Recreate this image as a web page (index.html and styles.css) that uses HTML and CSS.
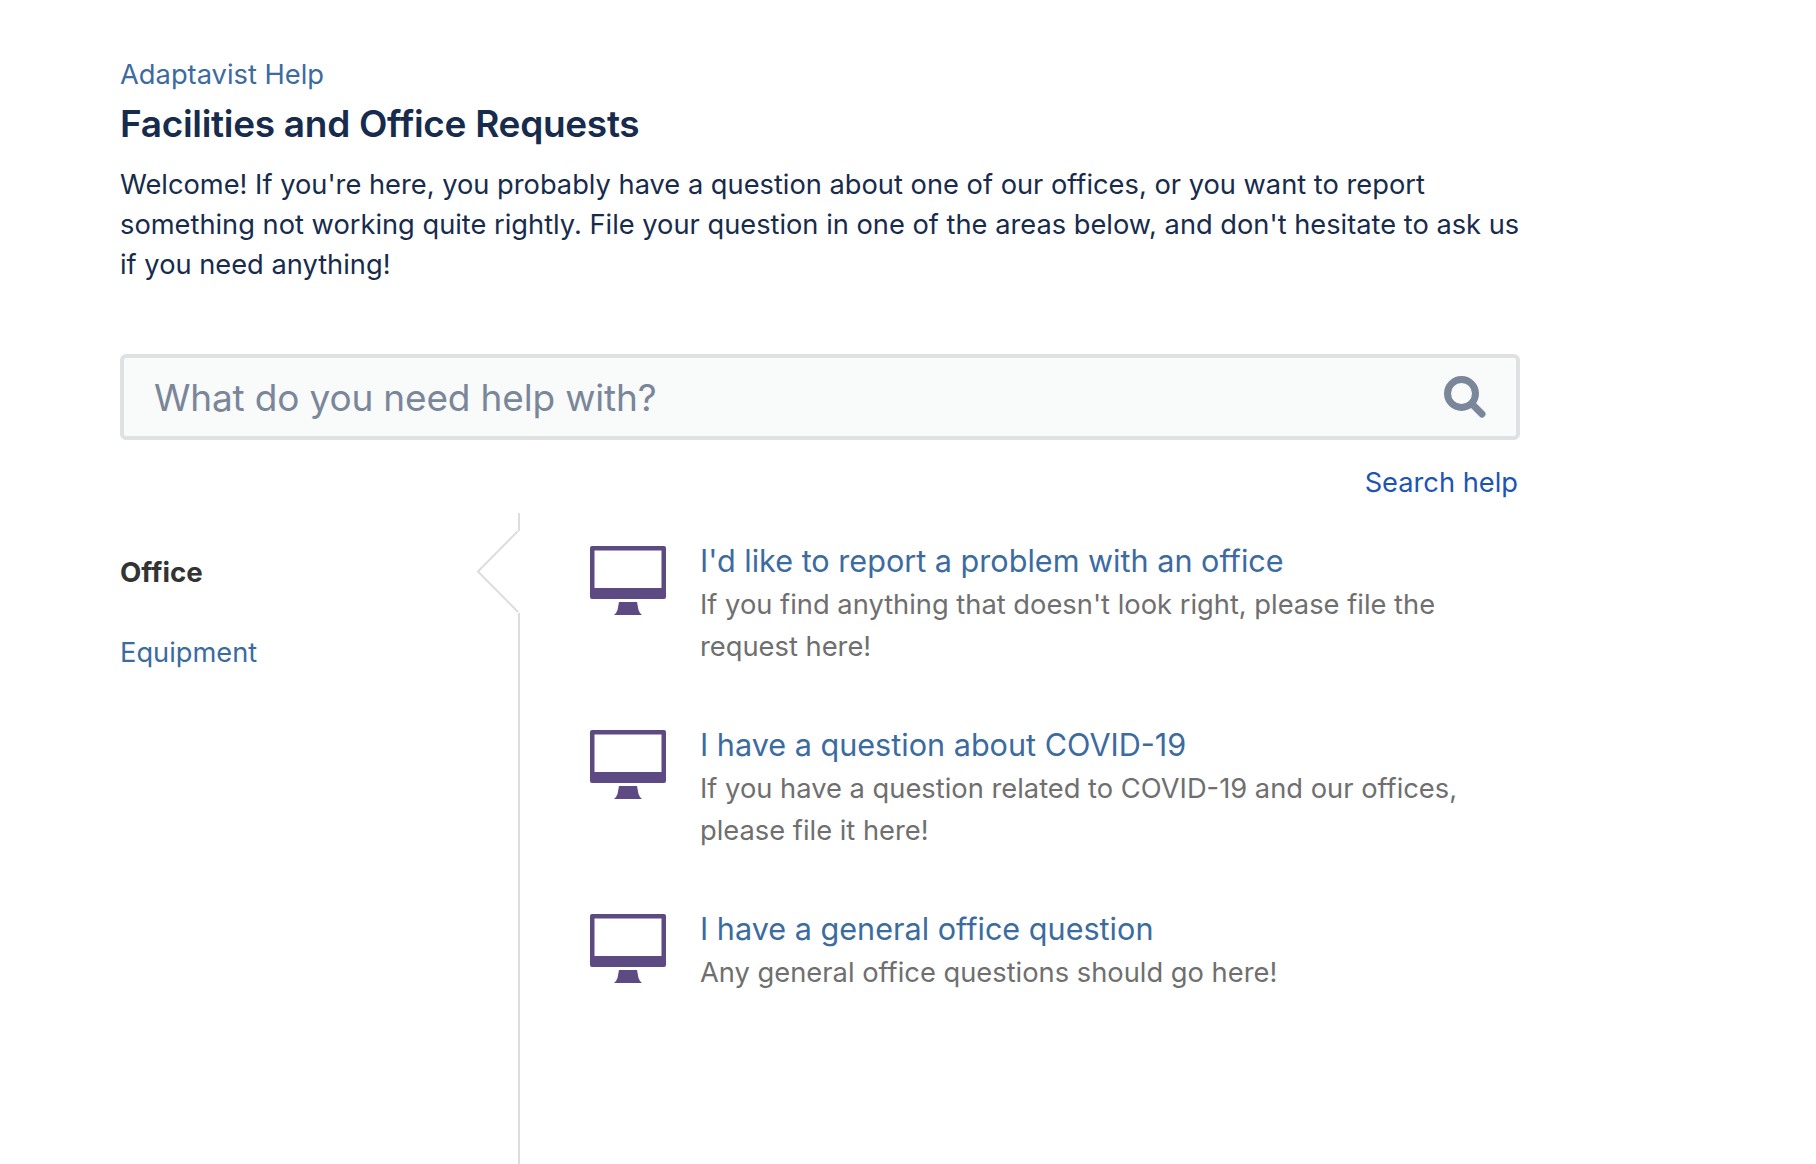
FILE: index.html
```html
<!DOCTYPE html>
<html lang="en">
<head>
<meta charset="utf-8">
<title>Facilities and Office Requests</title>
<link rel="stylesheet" href="styles.css">
</head>
<body>
<svg class="sprite" width="0" height="0" aria-hidden="true">
  <symbol id="monitor" viewBox="0 0 76 69">
    <path fill-rule="evenodd" d="M2 0H74a2 2 0 0 1 2 2V51a2 2 0 0 1-2 2H2a2 2 0 0 1-2-2V2a2 2 0 0 1 2-2ZM4.500 4.500V42H71.500V4.500Z"/>
    <path d="M29 56H47L48.500 64Q49.500 67 52 69H24Q26.500 67 27.500 64Z"/>
  </symbol>
</svg>
<div class="page">
  <header class="intro">
    <a class="crumb" href="#">Adaptavist Help</a>
    <h1>Facilities and Office Requests</h1>
    <p>Welcome! If you're here, you probably have a question about one of our offices, or you want to report something not working quite rightly. File your question in one of the areas below, and don't hesitate to ask us if you need anything!</p>
  </header>
  <form class="search">
    <input type="text" placeholder="What do you need help with?">
    <svg class="search-icon" viewBox="0 0 42 42" aria-hidden="true">
      <circle cx="17.500" cy="17.500" r="14" fill="none" stroke-width="7"/>
      <path d="M28 28 38 38" fill="none" stroke-width="7" stroke-linecap="round"/>
    </svg>
  </form>
  <div class="search-link"><a href="#">Search help</a></div>
  <div class="catalog">
    <nav class="groups">
      <span class="group active">Office</span>
      <a class="group" href="#">Equipment</a>
    </nav>
    <main class="requests">
      <svg class="notch" viewBox="0 0 43 82" aria-hidden="true"><path d="M41 0 1 40.500 41 81"/></svg>
      <article class="request">
        <svg class="icon"><use href="#monitor"/></svg>
        <div class="request-body">
          <a href="#">I'd like to report a problem with an office</a>
          <p>If you find anything that doesn't look right, please file the request here!</p>
        </div>
      </article>
      <article class="request">
        <svg class="icon"><use href="#monitor"/></svg>
        <div class="request-body">
          <a href="#">I have a question about COVID-19</a>
          <p>If you have a question related to COVID-19 and our offices, please file it here!</p>
        </div>
      </article>
      <article class="request">
        <svg class="icon"><use href="#monitor"/></svg>
        <div class="request-body">
          <a href="#">I have a general office question</a>
          <p>Any general office questions should go here!</p>
        </div>
      </article>
    </main>
  </div>
</div>
</body>
</html>
```
FILE: styles.css
```css
* { box-sizing: border-box; }
html, body { margin: 0; height: 100%; background: #fff; }
body { font-family: Inter, "Noto Sans", sans-serif; overflow: hidden; }
a { text-decoration: none; }
.sprite { position: absolute; }
.page { width: 1400px; margin-left: 120px; height: 1164px; display: flex; flex-direction: column; padding-top: 55px; }
.crumb { display: block; color: #3b6b9f; font-size: 27.3px; line-height: 40px; }
h1 { margin: 5px 0 0; font-size: 37px; line-height: 48px; font-weight: 600; color: #172b4d; letter-spacing: -0.3px; }
.intro p { margin: 17px 0 0; font-size: 27.25px; line-height: 40px; color: #172b4d; }
.search { position: relative; margin-top: 69px; }
.search input { display: block; width: 100%; height: 86px; padding: 0 90px 0 30px; border: 4px solid #dfe1e3; border-radius: 6px; background: #f9fafa; font: 37px Inter, sans-serif; letter-spacing: -0.17px; color: #172b4d; outline: none; }
.search input::placeholder { color: #7a8699; opacity: 1; }
.search-icon { position: absolute; right: 34px; top: 22px; width: 42px; height: 42px; stroke: #7a8699; }
.search-link { text-align: right; padding-right: 2px; margin-top: 24px; font-size: 27.25px; line-height: 38px; }
.search-link a { color: #1d55b4; }
.catalog { flex: 1; display: flex; margin-top: 11px; }
.groups { width: 398px; display: flex; flex-direction: column; gap: 41px; padding-top: 39px; font-size: 27.25px; line-height: 40px; }
.group { color: #3b6b9f; }
.group.active { font-size: 27.7px; font-weight: 700; color: #333; }
.requests { position: relative; flex: 1; border-left: 2px solid #dddddd; padding: 33px 0 0 70px; display: flex; flex-direction: column; gap: 62px; min-height: 0; }
.notch { position: absolute; left: -43px; top: 18px; width: 43px; height: 82px; fill: #fff; stroke: #dddddd; stroke-width: 2; background: linear-gradient(to right, transparent 41px, #fff 41px); }
.request { display: flex; gap: 34px; }
.icon { flex: none; width: 76px; height: 69px; fill: #5e4a83; }
.request-body { flex: 1; margin-top: -6px; }
.request-body a { display: block; font-size: 30.6px; line-height: 42px; margin-bottom: 2px; color: #3b6b9f; }
.request-body p { margin: 0; font-size: 27.3px; line-height: 42px; color: #6f6f6f; }
```
